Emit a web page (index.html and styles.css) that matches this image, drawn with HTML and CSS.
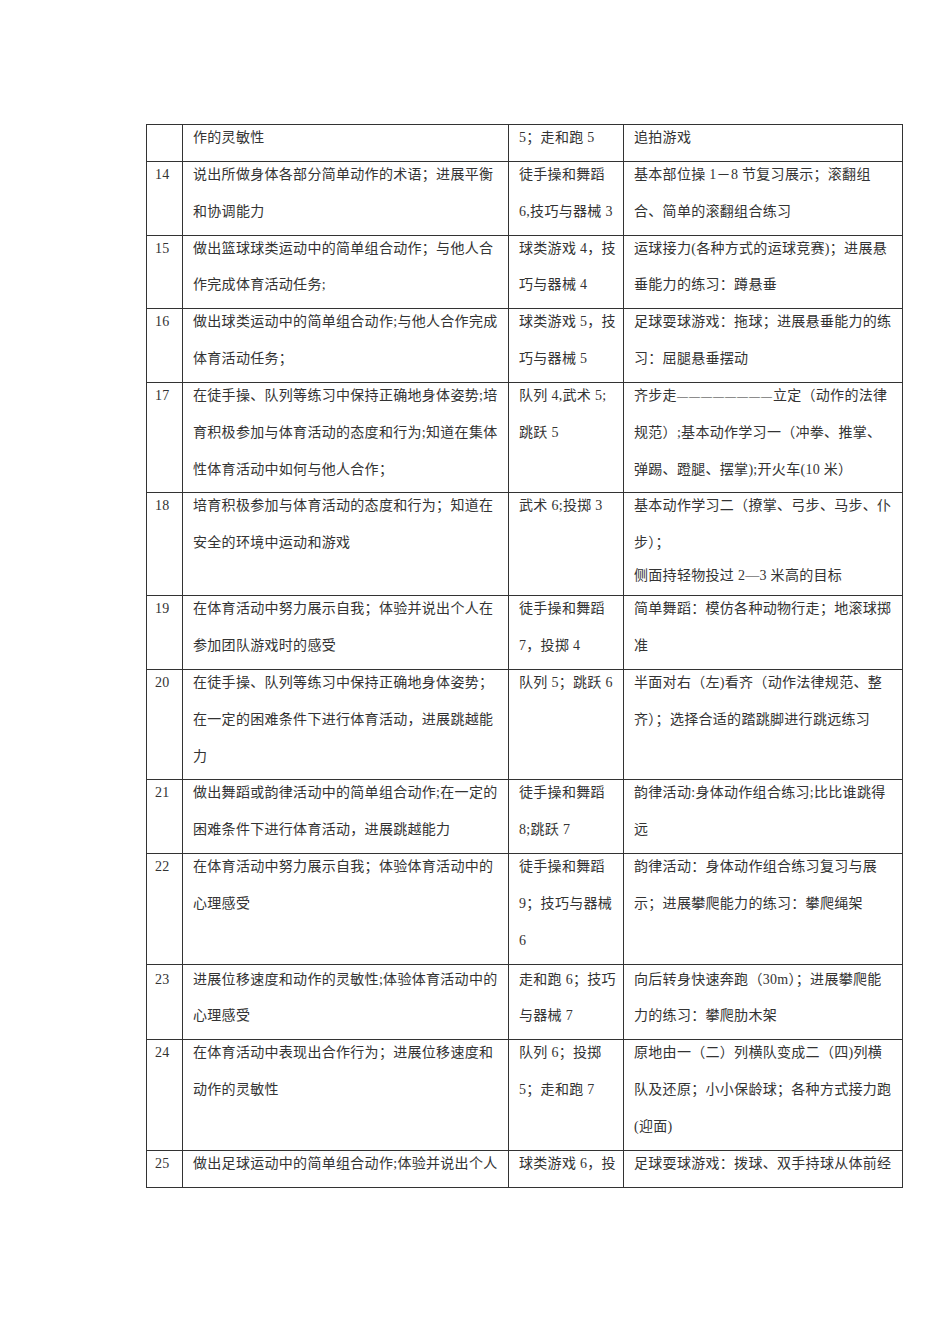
FILE: index.html
```html
<!DOCTYPE html>
<html lang="zh-CN">
<head>
<meta charset="utf-8">
<title>体育教学计划</title>
<link rel="stylesheet" href="styles.css">
</head>
<body>
<table class="plan">
  <colgroup>
    <col class="c-num"><col class="c-goal"><col class="c-unit"><col class="c-content">
  </colgroup>
  <tr>
    <td class="num"></td>
    <td><div class="lines">作的灵敏性</div></td>
    <td><div class="lines">5；走和跑 5</div></td>
    <td><div class="lines">追拍游戏</div></td>
  </tr>
  <tr>
    <td class="num"><div class="lines">14</div></td>
    <td><div class="lines">说出所做身体各部分简单动作的术语；进展平衡<br>和协调能力</div></td>
    <td><div class="lines">徒手操和舞蹈<br>6,技巧与器械 3</div></td>
    <td><div class="lines">基本部位操 1－8 节复习展示；滚翻组<br>合、简单的滚翻组合练习</div></td>
  </tr>
  <tr>
    <td class="num"><div class="lines">15</div></td>
    <td><div class="lines">做出篮球球类运动中的简单组合动作；与他人合<br>作完成体育活动任务;</div></td>
    <td><div class="lines">球类游戏 4，技<br>巧与器械 4</div></td>
    <td><div class="lines">运球接力(各种方式的运球竞赛)；进展悬<br>垂能力的练习：蹲悬垂</div></td>
  </tr>
  <tr>
    <td class="num"><div class="lines">16</div></td>
    <td><div class="lines">做出球类运动中的简单组合动作;与他人合作完成<br>体育活动任务；</div></td>
    <td><div class="lines">球类游戏 5，技<br>巧与器械 5</div></td>
    <td><div class="lines">足球耍球游戏：拖球；进展悬垂能力的练<br>习：屈腿悬垂摆动</div></td>
  </tr>
  <tr>
    <td class="num"><div class="lines">17</div></td>
    <td><div class="lines">在徒手操、队列等练习中保持正确地身体姿势;培<br>育积极参加与体育活动的态度和行为;知道在集体<br>性体育活动中如何与他人合作；</div></td>
    <td><div class="lines">队列 4,武术 5;<br>跳跃 5</div></td>
    <td><div class="lines">齐步走<span class="dash">————————</span>立定（动作的法律<br>规范）;基本动作学习一（冲拳、推掌、<br>弹踢、蹬腿、摆掌);开火车(10 米）</div></td>
  </tr>
  <tr>
    <td class="num"><div class="lines">18</div></td>
    <td><div class="lines">培育积极参加与体育活动的态度和行为；知道在<br>安全的环境中运动和游戏</div></td>
    <td><div class="lines">武术 6;投掷 3</div></td>
    <td><div class="lines">基本动作学习二（撩掌、弓步、马步、仆<br>步）；</div><div class="lines tight">侧面持轻物投过 2—3 米高的目标</div></td>
  </tr>
  <tr>
    <td class="num"><div class="lines">19</div></td>
    <td><div class="lines">在体育活动中努力展示自我；体验并说出个人在<br>参加团队游戏时的感受</div></td>
    <td><div class="lines">徒手操和舞蹈<br>7，投掷 4</div></td>
    <td><div class="lines">简单舞蹈：模仿各种动物行走；地滚球掷<br>准</div></td>
  </tr>
  <tr>
    <td class="num"><div class="lines">20</div></td>
    <td><div class="lines">在徒手操、队列等练习中保持正确地身体姿势；<br>在一定的困难条件下进行体育活动，进展跳越能<br>力</div></td>
    <td><div class="lines">队列 5；跳跃 6</div></td>
    <td><div class="lines">半面对右（左)看齐（动作法律规范、整<br>齐）；选择合适的踏跳脚进行跳远练习</div></td>
  </tr>
  <tr>
    <td class="num"><div class="lines">21</div></td>
    <td><div class="lines">做出舞蹈或韵律活动中的简单组合动作;在一定的<br>困难条件下进行体育活动，进展跳越能力</div></td>
    <td><div class="lines">徒手操和舞蹈<br>8;跳跃 7</div></td>
    <td><div class="lines">韵律活动:身体动作组合练习;比比谁跳得<br>远</div></td>
  </tr>
  <tr>
    <td class="num"><div class="lines">22</div></td>
    <td><div class="lines">在体育活动中努力展示自我；体验体育活动中的<br>心理感受</div></td>
    <td><div class="lines">徒手操和舞蹈<br>9；技巧与器械<br>6</div></td>
    <td><div class="lines">韵律活动：身体动作组合练习复习与展<br>示；进展攀爬能力的练习：攀爬绳架</div></td>
  </tr>
  <tr class="row-pad">
    <td class="num"><div class="lines">23</div></td>
    <td><div class="lines">进展位移速度和动作的灵敏性;体验体育活动中的<br>心理感受</div></td>
    <td><div class="lines">走和跑 6；技巧<br>与器械 7</div></td>
    <td><div class="lines">向后转身快速奔跑（30m）；进展攀爬能<br>力的练习：攀爬肋木架</div></td>
  </tr>
  <tr>
    <td class="num"><div class="lines">24</div></td>
    <td><div class="lines">在体育活动中表现出合作行为；进展位移速度和<br>动作的灵敏性</div></td>
    <td><div class="lines">队列 6；投掷<br>5；走和跑 7</div></td>
    <td><div class="lines">原地由一（二）列横队变成二（四)列横<br>队及还原；小小保龄球；各种方式接力跑<br>(迎面)</div></td>
  </tr>
  <tr>
    <td class="num"><div class="lines">25</div></td>
    <td><div class="lines">做出足球运动中的简单组合动作;体验并说出个人</div></td>
    <td><div class="lines">球类游戏 6，投</div></td>
    <td><div class="lines">足球耍球游戏：拨球、双手持球从体前经</div></td>
  </tr>
</table>
</body>
</html>
```
FILE: styles.css
```css
html, body {
  margin: 0;
  padding: 0;
  background: #ffffff;
}

body {
  font-family: "Liberation Serif", "Noto Sans CJK SC", serif;
  font-size: 14px;
  color: #333333;
}

.plan {
  border-collapse: collapse;
  table-layout: fixed;
  width: 756px;
  margin: 124px 0 0 146px;
}

.c-num { width: 36px; }
.c-goal { width: 326px; }
.c-unit { width: 115px; }
.c-content { width: 279px; }

.plan td {
  border: 1px solid #333333;
  vertical-align: top;
  padding: 0 4px 0 10px;
  white-space: nowrap;
  overflow: hidden;
}

.plan td.num {
  padding-left: 8px;
}

.lines {
  line-height: 36.85px;
  margin-top: -5px;
  margin-bottom: 4px;
  letter-spacing: 0.3px;
}

.lines.tight {
  line-height: 30px;
}

.row-pad td {
  padding-top: 2px;
}

.dash {
  font-family: "Liberation Serif", serif;
  font-size: 11px;
  letter-spacing: 1px;
}
```
